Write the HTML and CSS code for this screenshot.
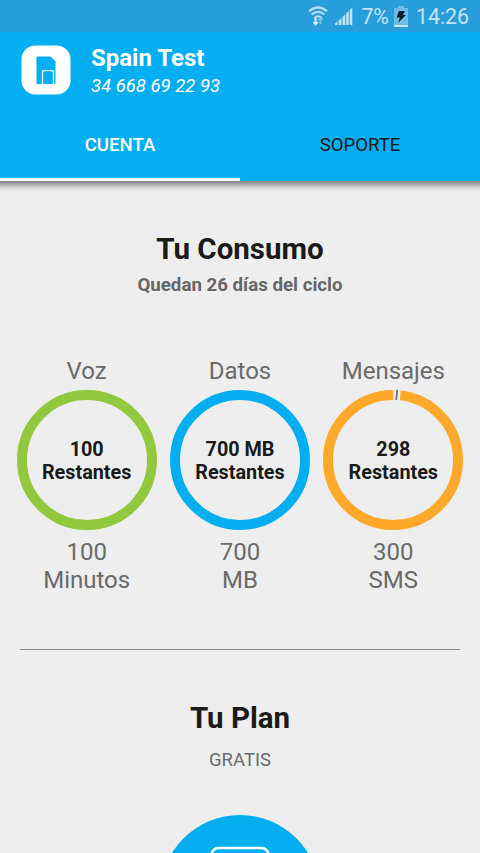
FILE: index.html
```html
<!DOCTYPE html>
<html lang="es">
<head>
    <meta charset="UTF-8">
    <meta name="viewport" content="width=device-width, initial-scale=1.0">
    <title>Cuenta</title>
    <link rel="stylesheet" href="styles.css">
</head>
<body>
    <div class="statusbar">
        <svg class="wifi" width="20" height="21" viewBox="0 0 20 21">
            <g fill="none" stroke="#b9dff3" stroke-width="2">
                <path d="M1 5.200Q10 -2.400 19 5.200"/>
                <path d="M3.600 8.600Q10 3 16.400 8.600"/>
                <path d="M6.200 12Q10 8.400 13.800 12"/>
            </g>
            <path d="M6.600 12h2v4h2l-3 4-3-4h2z" fill="#d8eef9"/>
            <path d="M11.500 18v-4H9.700l2.800-3.500 2.800 3.500h-1.800v4z" fill="#7cc3e8"/>
        </svg>
        <svg class="signal" width="18" height="18" viewBox="0 0 18 18">
            <g fill="#c3e4f5">
                <path d="M0 18v-1.500l2.500-2V18z"/>
                <path d="M3.700 18v-4.500l2.800-2.500v7z"/>
                <path d="M7.500 18V10l2.800-2.500V18z"/>
                <path d="M11.200 18V6.500L13.700 4v14z"/>
                <path d="M14.700 18V3L17.300 .5V18z"/>
            </g>
        </svg>
        <span class="percent">7%</span>
        <svg class="battery" width="14" height="21" viewBox="0 0 14 21">
            <path d="M4 0h6v2h4v19H0V2h4z" fill="#6fbce4"/>
            <path d="M0 19h14v2H0z" fill="#c8e7f6"/>
            <path d="M5 5h6l-2 4h3l-8 8 2-5.500H2.500z" fill="#06202e"/>
        </svg>
        <span class="clock">14:26</span>
    </div>

    <div class="header">
        <div class="user">
            <svg class="logo" width="50" height="50" viewBox="0 0 50 50">
                <rect x=".5" y=".5" width="49" height="49" rx="14" fill="#fff"/>
                <path d="M16.500 11.500h13l5 5V39H16.500q-1 0-1-1V12.500q0-1 1-1z" fill="#04aef0"/>
                <path d="M21.500 39V26.500q0-.8.800-.8h9.400q.8 0 .8.800V39" fill="#04aef0" stroke="#fff" stroke-width="1.300"/>
            </svg>
            <div class="user-info">
                <div class="user-name">Spain Test</div>
                <div class="user-phone">34 668 69 22 93</div>
            </div>
        </div>
        <div class="tabs">
            <div class="tab active">CUENTA</div>
            <div class="tab">SOPORTE</div>
        </div>
    </div>
    <div class="header-shadow"></div>

    <div class="content">
        <h1>Tu Consumo</h1>
        <p class="cycle">Quedan 26 días del ciclo</p>

        <div class="usage">
            <div class="usage-item">
                <div class="usage-title">Voz</div>
                <div class="ring green">100<br>Restantes</div>
                <div class="usage-total">100<br>Minutos</div>
            </div>
            <div class="usage-item">
                <div class="usage-title">Datos</div>
                <div class="ring blue">700 MB<br>Restantes</div>
                <div class="usage-total">700<br>MB</div>
            </div>
            <div class="usage-item">
                <div class="usage-title">Mensajes</div>
                <div class="ring orange">298<br>Restantes
                    <!-- used part of the bundle -->
                    <svg class="used" width="8" height="12" viewBox="0 0 8 12">
                        <path d="M.2 0H7.800L6.800 12H.2z" fill="#eee"/>
                        <path d="M3.200 .8h1.900L4.200 11H2.400z" fill="#777"/>
                    </svg>
                </div>
                <div class="usage-total">300<br>SMS</div>
            </div>
        </div>

        <hr>

        <h1>Tu Plan</h1>
        <p class="plan">GRATIS</p>
        <div class="plan-circle">
            <svg width="160" height="160" viewBox="0 0 160 160">
                <circle cx="80" cy="80" r="80" fill="#04aef0"/>
                <rect x="51.500" y="33" width="57" height="94" rx="7" fill="none" stroke="#fff" stroke-width="2.600"/>
            </svg>
        </div>
    </div>
</body>
</html>
```
FILE: styles.css
```css
body {
    margin: 0;
    height: 853px;
    display: flex;
    flex-direction: column;
    overflow: hidden;
    background-color: #eeeeee;
    font-family: Roboto, sans-serif;
    color: #1a1a1a;
}

.statusbar {
    display: flex;
    align-items: center;
    justify-content: flex-end;
    box-sizing: border-box;
    flex: none;
    height: 32px;
    padding-right: 11px;
    background-color: #279dd9;
    color: #c3e4f5;
    font-size: 21.3px;
}
.signal {
    margin: 0 8px 0 7px;
}
.battery {
    margin: 0 8px 0 5px;
}
.percent, .clock {
    line-height: 32px;
    padding-top: 2px;
}

/* Header with user and tabs */
.header {
    flex: none;
    height: 149px;
    background-color: #04aef0;
}
.header-shadow {
    flex: none;
    height: 10px;
    background: linear-gradient(#808080, #b4b4b4 40%, #dedede 75%, #eeeeee);
}
.user {
    display: flex;
    height: 76px;
    padding: 13px 0 0 21px;
    box-sizing: border-box;
    color: #fff;
}
.user-info {
    margin-left: 20px;
    margin-top: -1px;
}
.user-name {
    font-size: 24px;
    font-weight: bold;
    line-height: 28px;
}
.user-phone {
    font-size: 18.5px;
    font-style: italic;
    line-height: 28px;
}
.tabs {
    display: flex;
    height: 73px;
}
.tab {
    flex: 1;
    box-sizing: border-box;
    text-align: center;
    font-size: 18.6px;
    line-height: 74px;
}
.active {
    color: #fff;
    font-weight: 500;
    border-bottom: 3px solid #fff;
}

.content {
    flex: 1;
    min-height: 0;
    overflow: hidden;
    padding-top: 41px;
    text-align: center;
}
h1 {
    margin: 0;
    font-size: 29.5px;
    font-weight: bold;
    line-height: 34px;
}
.cycle {
    margin: 7px 0 0;
    color: #666;
    font-size: 18.7px;
    font-weight: bold;
    line-height: 24px;
}

/* Usage rings */
.usage {
    display: flex;
    padding: 60px 10px 0;
}
.usage-item {
    flex: 1;
    display: flex;
    flex-direction: column;
    align-items: center;
}
.usage-title, .usage-total {
    color: #6a6a6a;
    font-size: 24px;
    line-height: 28px;
}
.usage-title {
    height: 33px;
}
.usage-total {
    margin-top: 8px;
}
.ring {
    position: relative;
    box-sizing: border-box;
    width: 140px;
    height: 140px;
    padding-top: 38px;
    border: 10px solid;
    border-radius: 50%;
    font-size: 19.8px;
    font-weight: bold;
    line-height: 23px;
}
.green {
    border-color: #92c83e;
}
.blue {
    border-color: #04aef0;
}
.orange {
    border-color: #ffa92b;
}
.used {
    position: absolute;
    top: -11px;
    left: 60px;
}

hr {
    height: 1px;
    margin: 55px 20px 51px;
    border: 0;
    background-color: #8a8a8a;
}
.plan {
    margin: 13px 0 0;
    color: #6a6a6a;
    font-size: 18.5px;
    line-height: 24px;
}
.plan-circle {
    margin-top: 43px;
}
```
